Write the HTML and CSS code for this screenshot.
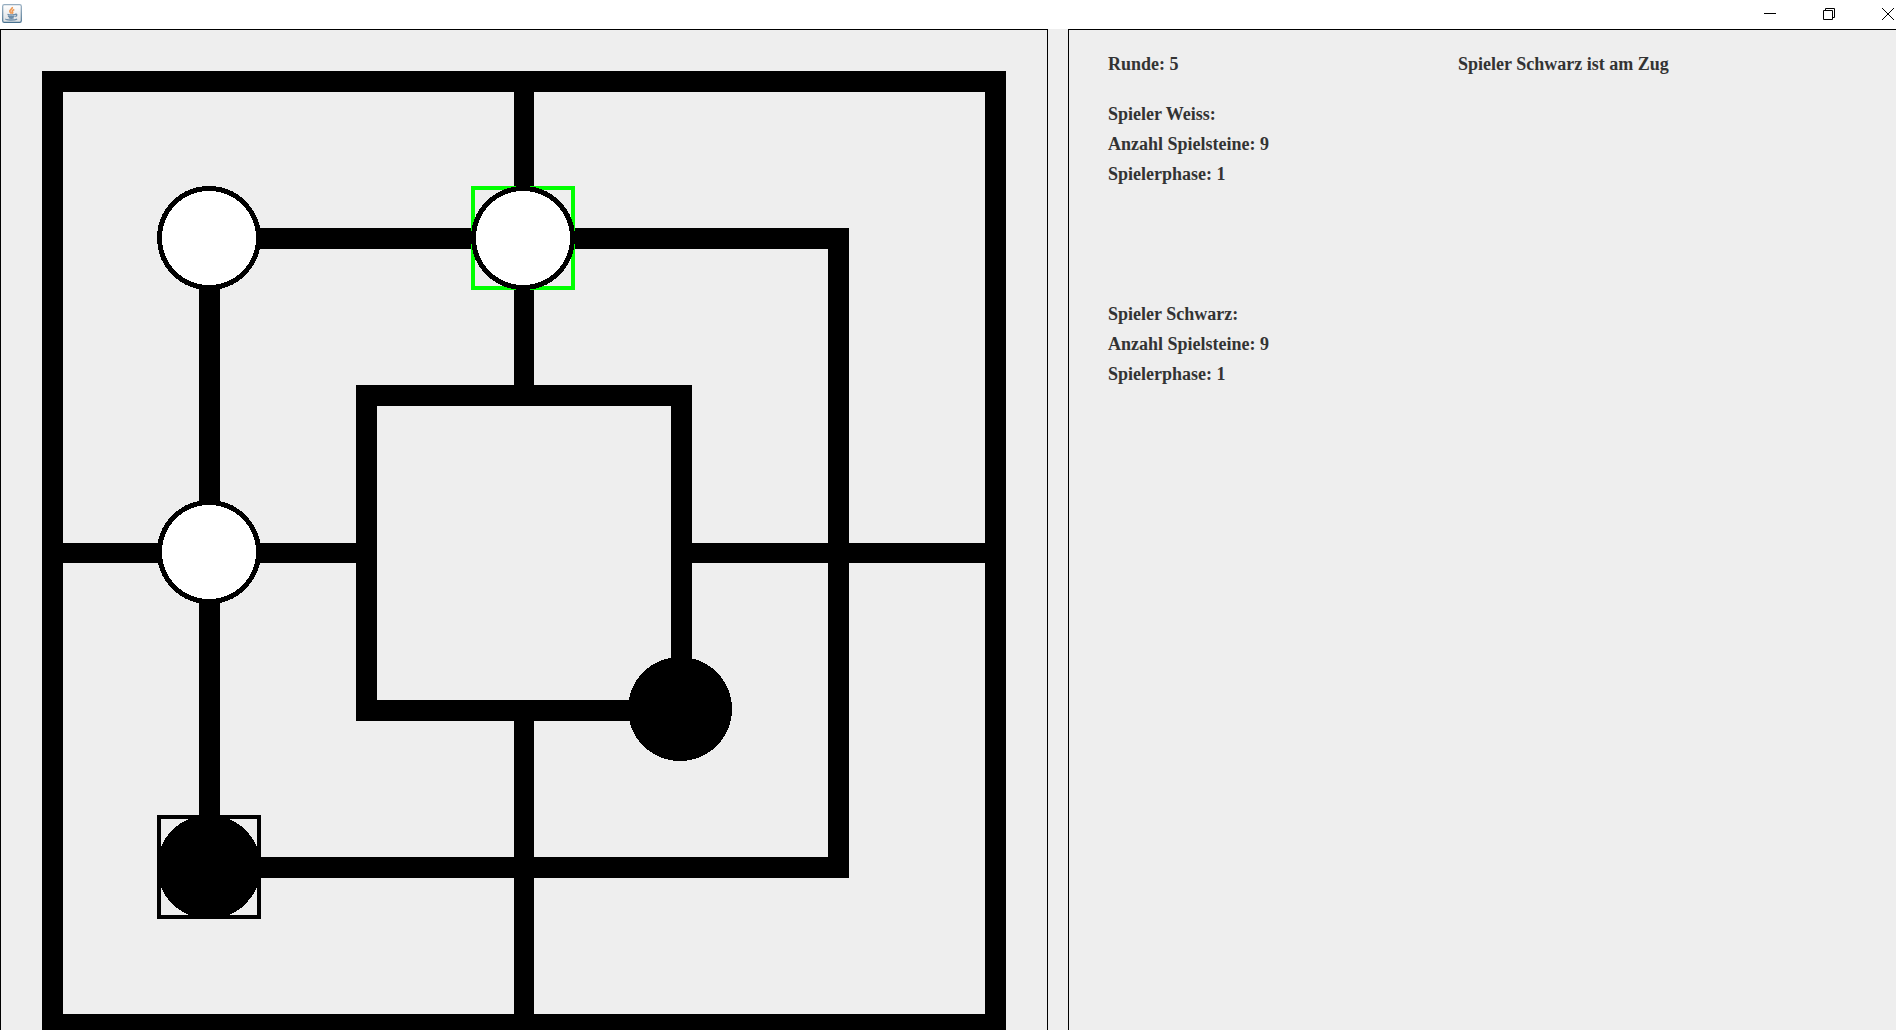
FILE: index.html
```html
<!DOCTYPE html>
<html lang="de">
<head>
<meta charset="utf-8">
<title>Mühle</title>
<link rel="stylesheet" href="styles.css">
</head>
<body>
<header class="titlebar">
  <svg class="app-icon" viewBox="0 0 20 19" aria-hidden="true">
    <defs>
      <linearGradient id="tile" x1="0" y1="0" x2="0" y2="1">
        <stop offset="0" stop-color="#ffffff"/>
        <stop offset="1" stop-color="#dcdfe2"/>
      </linearGradient>
      <linearGradient id="rim" x1="0" y1="0" x2="0" y2="1">
        <stop offset="0" stop-color="#96adc0"/>
        <stop offset="1" stop-color="#48718f"/>
      </linearGradient>
    </defs>
    <rect x=".7" y=".7" width="18.6" height="17.6" rx="1.6" fill="url(#tile)" stroke="url(#rim)" stroke-width="1.2"/>
    <path d="M10.3 3c.7 2-3.3 2.700-2.400 4.600.3.700 1.100 1.200 1.500 1.900M12.300 5.500c-1.700.7-2.700 1.400-1.800 2.400.5.700.2 1.200-.5 1.700" fill="none" stroke="#ee9a56" stroke-width="1.700"/>
    <path d="M5.500 10.300c2 .9 5.500.7 7.500 0M6 12.100c2 .8 4.500.8 6.500 0M6.800 13.700c1.500.6 3.500.6 5 0M13 10.400c2-.8 2.600 1.300.3 2.200M3.800 14.800c-.8 1.500 8.700 1.700 11.300.3" fill="none" stroke="#6d8da9" stroke-width="1.400"/>
  </svg>
  <div class="window-controls">
    <button class="control" type="button" aria-label="Minimieren">
      <svg viewBox="0 0 12 12"><path d="M0 5.500h12"/></svg>
    </button>
    <button class="control" type="button" aria-label="Verkleinern">
      <svg viewBox="0 0 12 12"><path d="M.5 2.500h9v9h-9zM2.500 2.500v-2h9v9h-2"/></svg>
    </button>
    <button class="control" type="button" aria-label="Schließen">
      <svg viewBox="0 0 12 12"><path d="M0 0l12 12M12 0L0 12"/></svg>
    </button>
  </div>
</header>
<main class="content">
  <section class="panel" aria-label="Spielbrett">
    <svg class="board" viewBox="1 30 1046 1046">
      <g class="lines">
        <rect x="52.500" y="81.500" width="943" height="943"/>
        <rect x="209.500" y="238.500" width="629" height="629"/>
        <rect x="366.500" y="395.500" width="315" height="315"/>
      </g>
      <g class="spokes">
        <path d="M524 81V396M524 711V1025M52 553H367M682 553H996"/>
      </g>
      <rect class="marker-white" x="473" y="188" width="100" height="100"/>
      <rect class="marker-black" x="159" y="817" width="100" height="100"/>
      <g class="white">
        <circle cx="209" cy="238" r="49.500"/>
        <circle cx="523" cy="238" r="49.500"/>
        <circle cx="209" cy="552" r="49.500"/>
      </g>
      <g class="black">
        <circle cx="209" cy="867" r="52"/>
        <circle cx="680" cy="709" r="52"/>
      </g>
    </svg>
  </section>
  <section class="panel status" aria-label="Spielstand">
    <div class="turn">
      <p>Runde: 5</p>
      <p>Spieler Schwarz ist am Zug</p>
    </div>
    <div class="player">
      <p>Spieler Weiss:</p>
      <p>Anzahl Spielsteine: 9</p>
      <p>Spielerphase: 1</p>
    </div>
    <div class="player">
      <p>Spieler Schwarz:</p>
      <p>Anzahl Spielsteine: 9</p>
      <p>Spielerphase: 1</p>
    </div>
  </section>
</main>
</body>
</html>
```
FILE: styles.css
```css
* {
  box-sizing: border-box;
}

body {
  display: flex;
  flex-direction: column;
  height: 100vh;
  margin: 0;
  overflow: hidden;
  background: #eee;
  color: #333;
  font: bold 18px/30px "Liberation Serif", "Times New Roman", serif;
}

p {
  margin: 0;
}

.titlebar {
  display: flex;
  flex: none;
  justify-content: space-between;
  height: 29px;
  padding-left: 2px;
  background: #fff;
}

.app-icon {
  width: 20px;
  height: 19px;
  margin-top: 4px;
}

.window-controls {
  display: flex;
  gap: 47px;
  padding: 8px 2px 0 0;
}

.control {
  width: 12px;
  height: 12px;
  padding: 0;
  border: 0;
  background: none;
}

.control svg {
  display: block;
  width: 12px;
  height: 12px;
  fill: none;
  stroke: #000;
  stroke-width: 1;
}

.content {
  display: grid;
  flex: 1;
  grid-template-columns: 1048fr 828fr;
  gap: 20px;
  min-height: 0;
}

.panel {
  min-width: 0;
  border: 1px solid #000;
  border-bottom: 0;
  overflow: hidden;
}

.board {
  display: block;
  width: 100%;
  fill: none;
  stroke: #000;
  shape-rendering: crispEdges;
}

.lines {
  stroke-width: 21;
}

.spokes {
  stroke-width: 20;
}

.marker-white {
  stroke: #0f0;
  stroke-width: 4;
}

.marker-black {
  stroke-width: 4;
}

.white {
  fill: #fff;
  stroke-width: 5;
}

.black {
  fill: #000;
  stroke: none;
}

.status {
  padding: 19px 39px;
  border-right: 0;
}

.turn {
  display: grid;
  grid-template-columns: 350px 1fr;
  margin-bottom: 20px;
}

.player {
  margin-bottom: 110px;
}
```
